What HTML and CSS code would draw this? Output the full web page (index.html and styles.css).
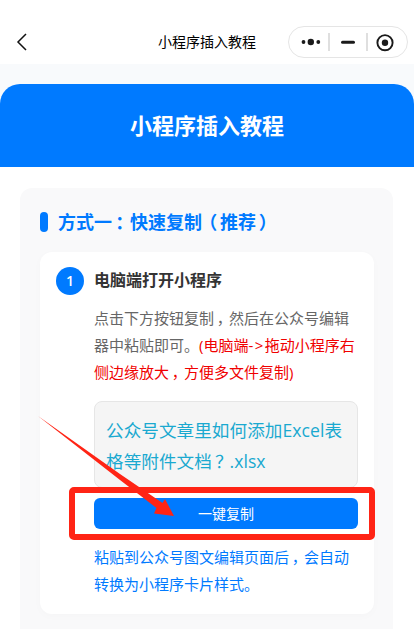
FILE: index.html
```html
<!DOCTYPE html>
<html lang="zh-CN">
<head>
<meta charset="UTF-8">
<meta name="viewport" content="width=device-width, initial-scale=1">
<title>小程序插入教程</title>
<link rel="stylesheet" href="styles.css">
</head>
<body>
<nav class="nav">
  <svg class="back" width="12" height="18" viewBox="0 0 12 18"><path d="M10 1 2 9l8 8"/></svg>
  <div class="nav-title">小程序插入教程</div>
  <div class="capsule">
    <svg width="120" height="32" viewBox="0 0 120 32">
      <g fill="#1a1a1a"><circle cx="15.5" cy="16" r="1.9"/><circle cx="22.8" cy="16" r="3.2"/><circle cx="30.3" cy="16" r="1.9"/><rect x="53" y="14.8" width="14" height="3" rx="1.5"/><circle cx="97" cy="16.7" r="3.2"/></g>
      <path d="M41 7v18M79 7v18" stroke="#d8d8d8" stroke-width="1.6"/>
      <circle cx="97" cy="16.7" r="7.6" fill="none" stroke="#1a1a1a" stroke-width="1.9"/>
    </svg>
  </div>
</nav>
<main class="page">
  <header class="hero"><h1>小程序插入教程</h1></header>
  <section class="section">
    <h2><span class="bar"></span>方式一<span class="mark">：</span>快速复制<span class="open">（</span>推荐<span class="close">）</span></h2>
    <article class="card">
      <span class="num">1</span>
      <div class="step">
        <h3>电脑端打开小程序</h3>
        <p class="desc">点击下方按钮复制<span class="mark">，</span>然后在公众号编辑<br>器中粘贴即可。<span class="red">(电脑端<span class="to">-&gt;</span>拖动小程序右<br>侧边缘放大<span class="mark">，</span>方便多文件复制)</span></p>
        <div class="file">公众号文章里如何添加Excel表<br>格等附件文档<span class="mark">？</span>.xlsx</div>
        <div class="action">
          <button>一键复制</button>
          <div class="highlight"></div>
          <svg class="arrow" width="140" height="106" viewBox="36 413 140 106"><path d="M38 416 120 474 162.5 503 165 499 174 516 154 513.5 156.5 508 120 480Z"/></svg>
        </div>
        <p class="note">粘贴到公众号图文编辑页面后<span class="mark">，</span>会自动<br>转换为小程序卡片样式。</p>
      </div>
    </article>
  </section>
</main>
</body>
</html>
```
FILE: styles.css
```css
* { box-sizing: border-box; margin: 0; padding: 0; }
body {
  width: 414px; height: 629px; overflow: hidden; background: #f8fafc;
  font-family: "Open Sans", "Noto Sans CJK SC", sans-serif; color: #333;
}
.nav {
  height: 64px; background: #fff; padding: 20px 6px 0 16px;
  display: grid; grid-template-columns: 120px 1fr 120px; align-items: center;
}
.back { fill: none; stroke: #111; stroke-width: 1.5; }
.nav-title { font-size: 14px; line-height: 44px; text-align: center; white-space: nowrap; color: #000; margin-left: -10px; }
.capsule { width: 120px; height: 32px; border: 1px solid #e5e5e5; border-radius: 16px; }
.capsule svg { display: block; margin: -1px; }
.page { margin-top: 20px; height: 545px; background: #fff; border-radius: 20px 20px 0 0; overflow: hidden; }
.hero { height: 83px; background: #007aff; color: #fff; text-align: center; }
.hero h1 { font-size: 22px; line-height: 83px; }
.section { margin: 21px 21px 0 20px; padding: 16px 19px 0 20px; height: 500px; background: #f9f9fa; border-radius: 12px; }
.section h2 { display: flex; align-items: center; font-size: 18px; line-height: 36px; color: #007aff; white-space: nowrap; }
.bar { width: 8px; height: 20px; border-radius: 4px; background: #007aff; margin-right: 10px; }
.card { display: flex; gap: 10px; margin-top: 12px; height: 362px; padding: 15px 16px; background: #fff; border-radius: 12px; box-shadow: 0 2px 10px rgba(0,0,0,.02); }
.num { flex: none; width: 28px; height: 28px; border-radius: 50%; background: #007aff; color: #fff; font-size: 14px; font-weight: 600; line-height: 28px; text-align: center; }
.step { width: 264px; }
.step h3 { font-size: 16px; line-height: 27px; font-weight: 600; color: #333; }
.desc, .note { font-size: 15px; line-height: 27px; white-space: nowrap; }
.desc { margin-top: 11px; color: #666; }
.red { color: #f00000; }
.to { letter-spacing: 1.5px; }
/* Full-width punctuation sits in the middle of its cell */
.mark { display: inline-block; width: 1em; text-indent: .18em; }
.open { display: inline-block; width: 1em; text-indent: -.15em; }
.close { display: inline-block; width: 1em; text-indent: .15em; }
.file { margin-top: 15px; height: 87px; padding: 13px 12px 11px 11px; border: 1px solid #e6e6e6; border-radius: 8px; background: #f5f5f5; color: #1aa9d0; font-size: 17.6px; letter-spacing: .05px; line-height: 31px; white-space: nowrap; }
.action { position: relative; margin-top: 10px; height: 31px; }
button { display: block; width: 100%; height: 31px; border: 0; border-radius: 6px; background: #007aff; color: #fff; font: 14px/31px "Noto Sans CJK SC", sans-serif; }
.highlight { position: absolute; left: -25px; top: -11px; width: 306px; height: 53px; border: 6px solid #ff2415; border-radius: 5px; }
.arrow { position: absolute; left: -58px; top: -85px; fill: #ff2415; }
.note { margin-top: 15px; color: #007aff; }
```
